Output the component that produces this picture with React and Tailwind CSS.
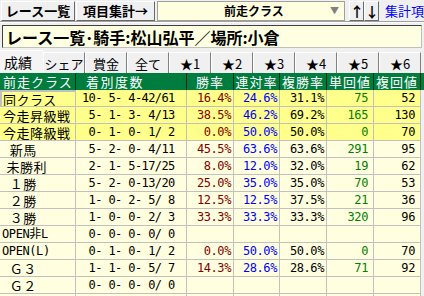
const rows = [
  { label: "同クラス", rec: "10- 5- 4-42/61", win: "16.4%", ren: "24.6%", fuku: "31.1%", tan: "75", fk: "52", hi: true, sel: true },
  { label: "今走昇級戦", rec: " 5- 1- 3- 4/13", win: "38.5%", ren: "46.2%", fuku: "69.2%", tan: "165", fk: "130", hi: true },
  { label: "今走降級戦", rec: " 0- 1- 0- 1/ 2", win: "0.0%", ren: "50.0%", fuku: "50.0%", tan: "0", fk: "70", hi: true },
  { label: "  新馬", rec: " 5- 2- 0- 4/11", win: "45.5%", ren: "63.6%", fuku: "63.6%", tan: "291", fk: "95" },
  { label: " 未勝利", rec: " 2- 1- 5-17/25", win: "8.0%", ren: "12.0%", fuku: "32.0%", tan: "19", fk: "62" },
  { label: "  １勝", rec: " 5- 2- 0-13/20", win: "25.0%", ren: "35.0%", fuku: "35.0%", tan: "70", fk: "53" },
  { label: "  ２勝", rec: " 1- 0- 2- 5/ 8", win: "12.5%", ren: "12.5%", fuku: "37.5%", tan: "21", fk: "36" },
  { label: "  ３勝", rec: " 1- 0- 0- 2/ 3", win: "33.3%", ren: "33.3%", fuku: "33.3%", tan: "320", fk: "96" },
  { label: "OPEN非L", rec: " 0- 0- 0- 0/ 0", win: "", ren: "", fuku: "", tan: "", fk: "", narrow: true },
  { label: "OPEN(L)", rec: " 0- 1- 0- 1/ 2", win: "0.0%", ren: "50.0%", fuku: "50.0%", tan: "0", fk: "70", narrow: true },
  { label: "  Ｇ３", rec: " 1- 1- 0- 5/ 7", win: "14.3%", ren: "28.6%", fuku: "28.6%", tan: "71", fk: "92" },
  { label: "  Ｇ２", rec: " 0- 0- 0- 0/ 0", win: "", ren: "", fuku: "", tan: "", fk: "" },
  { label: "", rec: "", win: "", ren: "", fuku: "", tan: "", fk: "" },
];

const tabs = ["成績", "シェア", "賞金", "全て", "★1", "★2", "★3", "★4", "★5", "★6"];

const jp = { fontFamily: '"Noto Sans CJK JP", sans-serif' };
const mono = { fontFamily: '"DejaVu Sans Mono", "Noto Sans CJK JP", monospace' };

const cols = "grid grid-cols-[76px_111px_47px_46px_47px_47px_47px]";
const btn =
  "shrink-0 h-[20px] bg-[#f0f0f0] border border-t-white border-l-white border-r-[#696969] border-b-[#696969] font-bold leading-none";

export default function App() {
  return (
    <div className="w-[424px] h-[296px] overflow-hidden bg-[#f0f0f0] text-black" style={jp}>
      {/* toolbar */}
      <div className="flex items-center h-[21px] pl-[1px] overflow-hidden">
        <button className={`${btn} w-[74px] text-[13px]`}>レース一覧</button>
        <button className={`${btn} ml-[1px] w-[79px] text-[13px]`}>項目集計→</button>
        <div className="shrink-0 ml-[2px] w-[188px] h-[20px] bg-[#ffffe0] border border-[#a0a0a0] flex items-center">
          <span className="ml-[66px] text-[12px] font-bold leading-none">前走クラス</span>
          <span className="ml-auto mr-[5px] text-[#808080] text-[9px] leading-none">▼</span>
        </div>
        <button className={`${btn} ml-[4px] w-[15px] text-[14px]`}>↑</button>
        <button className={`${btn} w-[15px] text-[14px]`}>↓</button>
        <span className="shrink-0 ml-[6px] text-[13px] text-[#0000ff] whitespace-nowrap leading-none">集計項目</span>
      </div>
      <div className="border-t border-[#a0a0a0]" />
      <div className="border-t border-white" />

      {/* title */}
      <div className="mt-[2px] mx-[2px] h-[23px] bg-[#ffffe1] border border-t-[#404040] border-l-[#404040] border-r-[#c0c0c0] border-b-[#c0c0c0] flex items-center pl-[3px]">
        <span className="text-[16px] font-bold leading-none whitespace-nowrap">レース一覧･騎手:松山弘平／場所:小倉</span>
      </div>

      {/* tabs */}
      <div className="mt-[2px] flex h-[23px] items-end">
        {tabs.map((t, i) => (
          <div
            key={t}
            className={
              i === 0
                ? "shrink-0 w-[43px] h-[23px] flex items-center pl-[4px] text-[14px] leading-none border-t border-white bg-[#f4f4f4]"
                : "shrink-0 w-[42px] h-[21px] flex items-center justify-center text-[13px] leading-none border-t border-l border-r border-t-white border-l-white border-r-[#808080]"
            }
          >
            {t}
          </div>
        ))}
      </div>

      {/* header */}
      <div className={`${cols} h-[17px] bg-[#007c3e] text-white text-[13px] leading-none`}>
        <div className="flex items-center pl-[3px] tracking-[1px] border-r border-[#003018]">前走クラス</div>
        <div className="flex items-center pl-[10px] tracking-[1.5px] border-r border-[#003018]">着別度数</div>
        <div className="flex items-center justify-center tracking-[1px] border-r border-[#003018]">勝率</div>
        <div className="flex items-center justify-center tracking-[1px] border-r border-[#003018]">連対率</div>
        <div className="flex items-center justify-center tracking-[1px] border-r border-[#003018]">複勝率</div>
        <div className="flex items-center justify-center tracking-[1px] border-r border-[#003018]">単回値</div>
        <div className="flex items-center justify-center tracking-[1px] border-r border-[#003018]">複回値</div>
      </div>

      {/* rows */}
      {rows.map((r, i) => {
        const bg = r.hi ? "bg-[#ffff8c]" : "bg-[#ffffe0]";
        const cell = `h-[17px] border-r border-b border-[#c0c0c0] flex items-center overflow-hidden ${bg}`;
        return (
          <div key={i} className={`${cols} text-[12px] leading-none`}>
            <div className={`${cell} ${r.sel ? "border-2 border-[#800000]" : ""}`}>
              <span
                className={`whitespace-pre ${r.narrow ? "text-[12px] pl-[2px] tracking-[-0.4px]" : r.sel ? "text-[13px] tracking-[0.5px] pl-[1px]" : "text-[13px] tracking-[0.5px] pl-[3px]"}`}
                style={r.narrow ? mono : jp}
              >
                {r.label}
              </span>
            </div>
            <div className={cell}>
              <span className="whitespace-pre pl-[6px] tracking-[-0.6px]" style={mono}>{r.rec}</span>
            </div>
            <div className={`${cell} justify-end pr-[2px] text-[#800000]`}>
              <span className="tracking-[-0.4px]" style={mono}>{r.win}</span>
            </div>
            <div className={`${cell} justify-end pr-[2px] text-[#0000ff]`}>
              <span className="tracking-[-0.4px]" style={mono}>{r.ren}</span>
            </div>
            <div className={`${cell} justify-end pr-[2px]`}>
              <span className="tracking-[-0.4px]" style={mono}>{r.fuku}</span>
            </div>
            <div className={`${cell} justify-end pr-[5px] text-[#008000]`}>
              <span className="tracking-[-0.4px]" style={mono}>{r.tan}</span>
            </div>
            <div className={`${cell} justify-end pr-[5px]`}>
              <span className="tracking-[-0.4px]" style={mono}>{r.fk}</span>
            </div>
          </div>
        );
      })}
    </div>
  );
}
